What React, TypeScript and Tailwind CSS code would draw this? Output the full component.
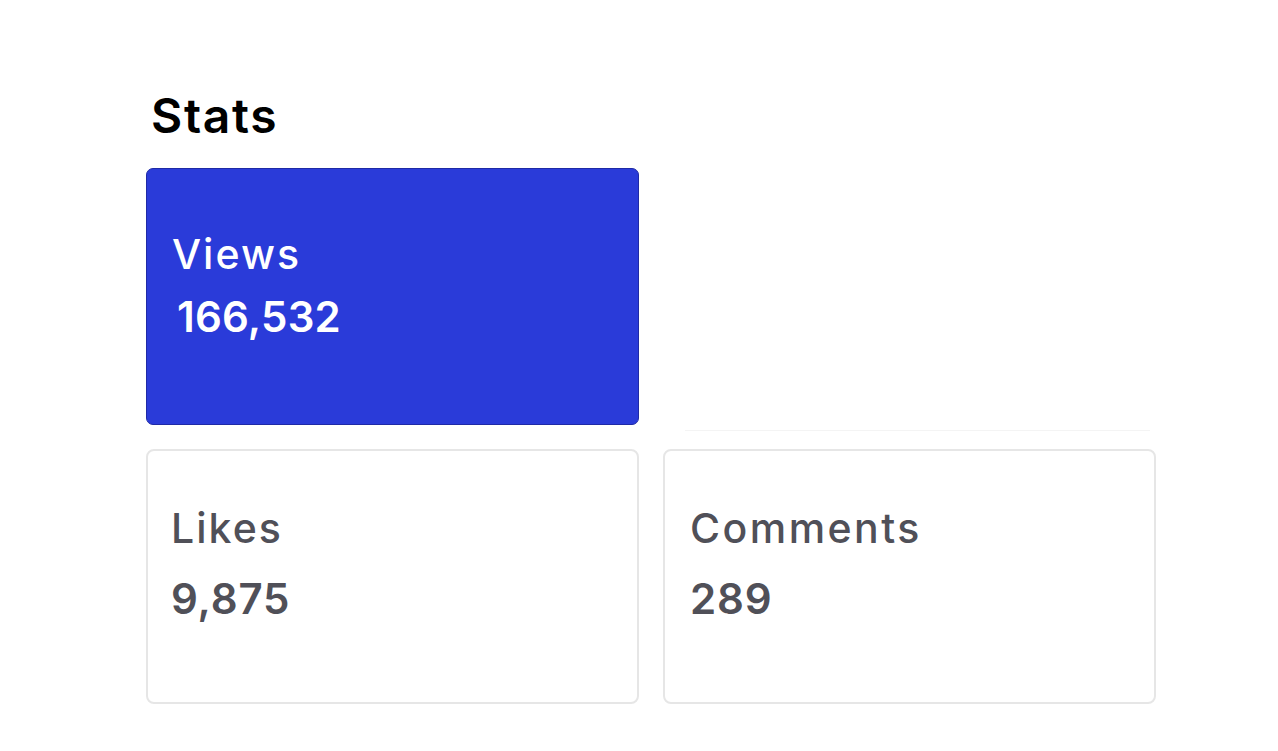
import React from "react";

const font = { fontFamily: "Inter, 'Noto Sans', sans-serif" };

export default function App() {
  return (
    <div className="min-h-[751px] w-full bg-white pl-[146px] pt-[92px]" style={font}>
      <h1 className="ml-[5px] text-[48px] leading-none font-semibold text-black tracking-[0.035em]">
        Stats
      </h1>
      <div className="mt-[28px] grid grid-cols-[493px_493px] gap-x-6 gap-y-6">
        <div className="h-[257px] rounded-[7px] border border-[#1f2aa6] bg-[#2a3bd9] pl-[25px] pt-[65px] text-white">
          <div className="text-[41px] leading-none font-medium tracking-[0.05em]">Views</div>
          <div className="mt-[21px] pl-[5px] text-[42px] leading-none font-semibold tracking-[0.005em]">
            166,532
          </div>
        </div>
        <div className="flex items-end">
          <div className="mb-[-6px] ml-[22px] h-px w-[465px] bg-[#f4f4f4]" />
        </div>
        <div className="h-[255px] rounded-[8px] border-2 border-[#e6e6e6] pl-[23px] pt-[57px] text-[#505058]">
          <div className="text-[41px] leading-none font-medium tracking-[0.05em]">Likes</div>
          <div className="mt-[29px] text-[42px] leading-none font-semibold tracking-[0.02em]">9,875</div>
        </div>
        <div className="h-[255px] rounded-[8px] border-2 border-[#e6e6e6] pl-[25px] pt-[57px] text-[#505058]">
          <div className="text-[41px] leading-none font-medium tracking-[0.06em]">Comments</div>
          <div className="mt-[29px] text-[42px] leading-none font-semibold tracking-[0.02em]">289</div>
        </div>
      </div>
    </div>
  );
}
